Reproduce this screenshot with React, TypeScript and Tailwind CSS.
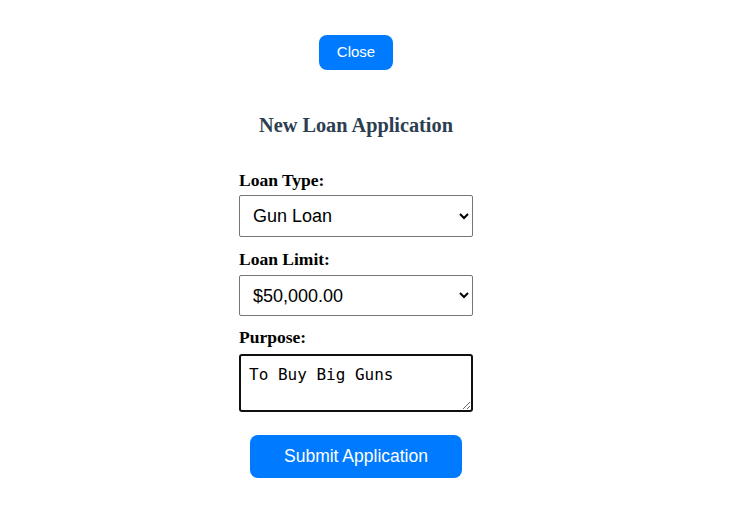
import React from "react";

export default function App() {
  return (
    <div className="w-[712px] min-h-[519px] bg-white flex flex-col items-center font-['Liberation_Serif',serif]">
      <button className="mt-[35px] h-[35px] w-[74px] rounded-lg bg-[#007bff] text-white text-[15px] font-['Liberation_Sans',Arial,sans-serif]">
        Close
      </button>
      <h2 className="mt-[43px] text-[20.3px] leading-[24px] font-bold text-[#2c3e50]">New Loan Application</h2>
      <form className="mt-[33px] w-[234px] flex flex-col" onSubmit={(e) => e.preventDefault()}>
        <label className="block text-[17.5px] leading-[20px] font-bold text-black mb-[5px]">Loan Type:</label>
        <select
          defaultValue="gun"
          className="h-[42px] w-full border border-[#767676] rounded-[2px] bg-white text-black text-[18px] pl-[9px] pr-2 font-['Liberation_Sans',Arial,sans-serif]"
        >
          <option value="gun">Gun Loan</option>
          <option value="car">Car Loan</option>
        </select>
        <label className="block mt-[12px] text-[17.5px] leading-[20px] font-bold text-black mb-[6px]">Loan Limit:</label>
        <select
          defaultValue="50"
          className="h-[41px] w-full border border-[#767676] rounded-[2px] bg-white text-black text-[18px] pl-[9px] pr-2 font-['Liberation_Sans',Arial,sans-serif]"
        >
          <option value="50">$50,000.00</option>
          <option value="100">$100,000.00</option>
        </select>
        <label className="block mt-[11px] text-[17.5px] leading-[20px] font-bold text-black mb-[7px]">Purpose:</label>
        <textarea
          defaultValue="To Buy Big Guns"
          className="h-[58px] w-full border-2 border-[#101010] rounded-[3px] bg-white text-black text-[16px] leading-[20px] px-[8px] pt-[9px] pb-[5px] outline-none font-['DejaVu_Sans_Mono',monospace]"
        />
        <button
          type="submit"
          className="mt-[23px] self-center h-[43px] w-[212px] rounded-lg bg-[#007bff] text-white text-[17.5px] font-['Liberation_Sans',Arial,sans-serif]"
        >
          Submit Application
        </button>
      </form>
    </div>
  );
}
